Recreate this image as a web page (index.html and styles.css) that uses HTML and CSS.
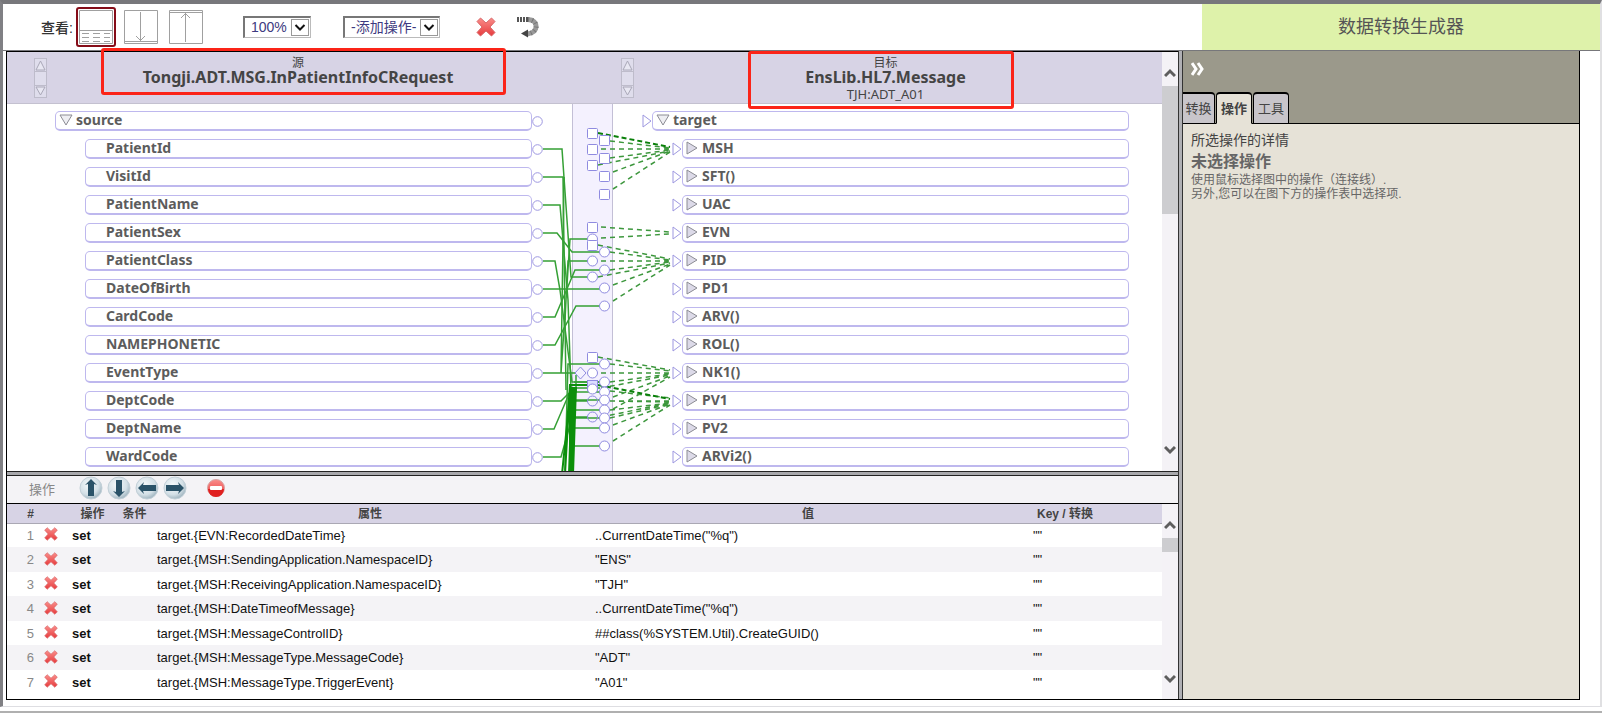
FILE: index.html
```html
<!DOCTYPE html>
<html lang="zh-CN">
<head>
<meta charset="utf-8">
<title>数据转换生成器</title>
<link rel="stylesheet" href="styles.css">
</head>
<body>
<svg class="defs" aria-hidden="true">
  <defs>
    <linearGradient id="redGrad" x1="0" y1="0" x2="0" y2="1"><stop offset="0" stop-color="#fa8d8a"/><stop offset="1" stop-color="#e63a3c"/></linearGradient>
    <radialGradient id="ballGrad" cx=".4" cy=".35" r=".7"><stop offset="0" stop-color="#f4f9fb"/><stop offset=".65" stop-color="#d3dfe6"/><stop offset="1" stop-color="#97adb9"/></radialGradient>
    <symbol id="cross" viewBox="0 0 20 20"><path d="M4.500 1 10 6 15.500 1 19 4.500 14 10 19 15.500 15.500 19 10 14 4.500 19 1 15.500 6 10 1 4.500Z" fill="url(#redGrad)" stroke="#d9686a" stroke-width="1" stroke-linejoin="round"/></symbol>
    <symbol id="ball" viewBox="0 0 24 24"><circle cx="12" cy="12" r="11" fill="url(#ballGrad)" stroke="#c3d0d8"/></symbol>
    <symbol id="down" viewBox="0 0 14 12"><path d="M1 1H13L7 11Z" fill="#eeeef2" stroke="#8c8c94"/></symbol>
    <symbol id="right" viewBox="0 0 12 14"><path d="M1 1V13L11 7Z" fill="#dcdae8" stroke="#8c8c94"/></symbol>
    <symbol id="inport" viewBox="0 0 10 14"><path d="M1 1V13L9 7Z" fill="#fff" stroke="#9d97e0"/></symbol>
    <symbol id="outport" viewBox="0 0 11 11"><circle cx="5.500" cy="5.500" r="4.800" fill="#fff" stroke="#9d97e0"/></symbol>
    <symbol id="chevUp" viewBox="0 0 12 10"><path d="M1 8 6 3 11 8" fill="none" stroke="#5e5e5e" stroke-width="3"/></symbol>
    <symbol id="chevDown" viewBox="0 0 12 10"><path d="M1 2 6 7 11 2" fill="none" stroke="#5e5e5e" stroke-width="3"/></symbol>
    <symbol id="spin" viewBox="0 0 13 40"><rect x=".5" y=".5" width="12" height="39" fill="#dfddec" stroke="#bebccb"/><path d="M.5 13.500H12.500M.5 27.500H12.500" stroke="#bebccb"/><path d="M6.500 3 11 12H2ZM6.500 37 11 29H2Z" fill="#e8e7f2" stroke="#aaa8b8"/></symbol>
  </defs>
</svg>
<div class="window">
  <header class="toolbar">
    <span class="view-label">查看:</span>
    <div class="views">
      <button class="view selected" aria-label="分栏视图"><svg width="34" height="34" viewBox="0 0 34 34"><path d="M.5.5H33.500V33.500H.5ZM.5 20.500H33.500M3 23.500H10M14 23.500H21M25 23.500H31M3 27.500H10M14 27.500H21M25 27.500H31M3 31.500H10M14 31.500H21M25 31.500H31" fill="none" stroke="#a0a0a0"/></svg></button>
      <button class="view" aria-label="仅图"><svg width="34" height="34" viewBox="0 0 34 34"><path d="M.5.5H33.500V33.500H.5ZM.5 31.500H33.500M16.500 2V31M12 26 16.500 30.500 21 26" fill="none" stroke="#a0a0a0"/></svg></button>
      <button class="view" aria-label="仅操作"><svg width="34" height="34" viewBox="0 0 34 34"><path d="M.5.5H33.500V33.500H.5ZM.5 2.500H33.500M16.500 3V32M12 8 16.500 3.500 21 8" fill="none" stroke="#a0a0a0"/></svg></button>
    </div>
    <span class="select zoom"><select aria-label="缩放"><option>100%</option></select><svg width="18" height="17" viewBox="0 0 18 17"><rect x=".5" y=".5" width="17" height="16" fill="#fff" stroke="#999"/><path d="M4.500 6 9 10.500 13.500 6" fill="none" stroke="#111" stroke-width="2"/></svg></span>
    <span class="select add"><select aria-label="添加操作"><option>-添加操作-</option></select><svg width="18" height="17" viewBox="0 0 18 17"><rect x=".5" y=".5" width="17" height="16" fill="#fff" stroke="#999"/><path d="M4.500 6 9 10.500 13.500 6" fill="none" stroke="#111" stroke-width="2"/></svg></span>
    <button class="icon-btn" aria-label="删除"><svg width="20" height="20"><use href="#cross"/></svg></button>
    <button class="icon-btn undo" aria-label="撤消"><svg width="24" height="24" viewBox="0 0 24 24"><path d="M12 4.500C23 5 23 18 11 19" fill="none" stroke="#9a9a9a" stroke-width="5"/><path d="M12 4.500C23 5 23 18 11 19" fill="none" stroke="#777" stroke-width="5" stroke-dasharray="1 3"/><path d="M1 4.500H13" stroke="#555" stroke-width="5" stroke-dasharray="2 1"/><path d="M5 18.500 12 14.500V22.500Z" fill="#444"/></svg></button>
    <h1 class="page-title">数据转换生成器</h1>
  </header>

  <main class="workspace">
    <div class="left">
      <section class="diagram">
        <div class="diagram-main">
          <div class="heads">
            <div class="head source-head">
              <svg width="13" height="40"><use href="#spin"/></svg>
              <div class="head-text"><span>源</span><strong>Tongji.ADT.MSG.InPatientInfoCRequest</strong></div>
              <i class="mark mark-source"></i>
            </div>
            <div class="head target-head">
              <svg width="13" height="40"><use href="#spin"/></svg>
              <div class="head-text"><span>目标</span><strong>EnsLib.HL7.Message</strong><small>TJH:ADT_A01</small></div>
              <i class="mark mark-target"></i>
            </div>
          </div>
          <div class="canvas">
            <ul class="tree source">
              <li class="root"><span class="box"><svg width="14" height="12"><use href="#down"/></svg>source</span><svg width="11" height="11"><use href="#outport"/></svg></li>
              <li><span class="box">PatientId</span><svg width="11" height="11"><use href="#outport"/></svg></li>
              <li><span class="box">VisitId</span><svg width="11" height="11"><use href="#outport"/></svg></li>
              <li><span class="box">PatientName</span><svg width="11" height="11"><use href="#outport"/></svg></li>
              <li><span class="box">PatientSex</span><svg width="11" height="11"><use href="#outport"/></svg></li>
              <li><span class="box">PatientClass</span><svg width="11" height="11"><use href="#outport"/></svg></li>
              <li><span class="box">DateOfBirth</span><svg width="11" height="11"><use href="#outport"/></svg></li>
              <li><span class="box">CardCode</span><svg width="11" height="11"><use href="#outport"/></svg></li>
              <li><span class="box">NAMEPHONETIC</span><svg width="11" height="11"><use href="#outport"/></svg></li>
              <li><span class="box">EventType</span><svg width="11" height="11"><use href="#outport"/></svg></li>
              <li><span class="box">DeptCode</span><svg width="11" height="11"><use href="#outport"/></svg></li>
              <li><span class="box">DeptName</span><svg width="11" height="11"><use href="#outport"/></svg></li>
              <li><span class="box">WardCode</span><svg width="11" height="11"><use href="#outport"/></svg></li>
            </ul>
            <div class="band"></div>
            <ul class="tree target">
              <li class="root"><svg width="10" height="14"><use href="#inport"/></svg><span class="box"><svg width="14" height="12"><use href="#down"/></svg>target</span></li>
              <li><svg width="10" height="14"><use href="#inport"/></svg><span class="box"><svg width="12" height="14"><use href="#right"/></svg>MSH</span></li>
              <li><svg width="10" height="14"><use href="#inport"/></svg><span class="box"><svg width="12" height="14"><use href="#right"/></svg>SFT()</span></li>
              <li><svg width="10" height="14"><use href="#inport"/></svg><span class="box"><svg width="12" height="14"><use href="#right"/></svg>UAC</span></li>
              <li><svg width="10" height="14"><use href="#inport"/></svg><span class="box"><svg width="12" height="14"><use href="#right"/></svg>EVN</span></li>
              <li><svg width="10" height="14"><use href="#inport"/></svg><span class="box"><svg width="12" height="14"><use href="#right"/></svg>PID</span></li>
              <li><svg width="10" height="14"><use href="#inport"/></svg><span class="box"><svg width="12" height="14"><use href="#right"/></svg>PD1</span></li>
              <li><svg width="10" height="14"><use href="#inport"/></svg><span class="box"><svg width="12" height="14"><use href="#right"/></svg>ARV()</span></li>
              <li><svg width="10" height="14"><use href="#inport"/></svg><span class="box"><svg width="12" height="14"><use href="#right"/></svg>ROL()</span></li>
              <li><svg width="10" height="14"><use href="#inport"/></svg><span class="box"><svg width="12" height="14"><use href="#right"/></svg>NK1()</span></li>
              <li><svg width="10" height="14"><use href="#inport"/></svg><span class="box"><svg width="12" height="14"><use href="#right"/></svg>PV1</span></li>
              <li><svg width="10" height="14"><use href="#inport"/></svg><span class="box"><svg width="12" height="14"><use href="#right"/></svg>PV2</span></li>
              <li><svg width="10" height="14"><use href="#inport"/></svg><span class="box"><svg width="12" height="14"><use href="#right"/></svg>ARVi2()</span></li>
            </ul>
            <svg class="wires" width="680" height="400" viewBox="7 104 680 400">
              <g fill="none" stroke="#35a035" stroke-width="1.500">
                <path d="M543 149H562L571 277H588"/>
                <path d="M543 177H563L566 390"/>
                <path d="M543 205H560L568 300 571 390"/>
                <path d="M543 233H557L572 252H600"/>
                <path d="M543 261H555L560 290 572 382H600"/>
                <path d="M543 289H600"/>
                <path d="M543 317H555L575 270H600"/>
                <path d="M543 345H555L576 306H600"/>
                <path d="M543 373H561L564 177M543 373H576M561 373 566 300 570 239H588M565 320 568 261H588"/>
                <path d="M543 401H561L569 393M543 429H554L569 394M543 457H561L570 425"/>
                <path d="M565 470 568 364H600M576 375V392H600M571 470V385H588M574 382H600M576 388H600M573 401H588M573 400H600M572 410H600M573 417H588M573 418H600M572 428H600M572 446H600"/>
              </g>
              <g fill="none" stroke="#0b8f0b" stroke-width="2">
                <path d="M588 385H570L567 425 562 474M570 387 565 474M572 387 569 474M574 387 571 474M576 387 573 474"/>
                <path d="M570 385V474"/>
              </g>
              <g fill="none" stroke="#3d973d" stroke-width="1.500" stroke-dasharray="5 4">
                <path d="M610 141 670 148M601 149H670M610 158 670 150M598 165 670 151M613 172 670 151M613 189 670 152"/>
                <path d="M601 227 670 232M601 238 670 234"/>
                <path d="M598 245 670 259M610 252 670 260M601 261H670M610 270 670 262M598 277 670 263M613 285 670 264M613 301 670 265"/>
                <path d="M598 357 670 370M610 364 670 371M601 373H670M610 382 670 374M601 388 670 375M613 397 670 376M613 409 670 377"/>
                <path d="M610 391 670 398M601 401H670M610 401 670 402M610 410 670 403M601 417 670 403M610 418 670 404M613 425 670 404M613 441 670 405"/>
              </g>
              <path d="M598 133 670 147M598 385 670 399" fill="none" stroke="#0a800a" stroke-width="2" stroke-dasharray="5 3"/>
              <g fill="#fff" stroke="#8f8be0">
                <circle cx="592.500" cy="239" r="5"/>
                <rect x="587.500" y="128.500" width="10" height="10" rx="1"/><rect x="599.500" y="135.500" width="10" height="10" rx="1"/>
                <rect x="587.500" y="144.500" width="10" height="10" rx="1"/><rect x="599.500" y="153.500" width="10" height="10" rx="1"/>
                <rect x="587.500" y="160.500" width="10" height="10" rx="1"/><rect x="599.500" y="171.500" width="10" height="10" rx="1"/>
                <rect x="599.500" y="189.500" width="10" height="10" rx="1"/><rect x="587.500" y="222.500" width="10" height="10" rx="1"/>
                <rect x="587.500" y="240.500" width="10" height="10" rx="1"/><rect x="587.500" y="352.500" width="10" height="10" rx="1"/>
                <circle cx="604.500" cy="252" r="5"/><circle cx="592.500" cy="261" r="5"/><circle cx="604.500" cy="270" r="5"/><circle cx="592.500" cy="277" r="5"/>
                <circle cx="604.500" cy="288" r="5"/><circle cx="604.500" cy="306" r="5"/><circle cx="604.500" cy="364" r="5"/><circle cx="592.500" cy="373" r="5"/>
                <path d="M575 373 580.500 367 586 373 580.500 379Z" fill="none"/>
                <rect x="587.500" y="380.500" width="10" height="10" fill="#dcdcff"/>
                <circle cx="604.500" cy="382" r="5"/><circle cx="604.500" cy="392" r="5"/><circle cx="592.500" cy="389" r="5"/><circle cx="604.500" cy="400" r="5"/>
                <circle cx="592.500" cy="401" r="5" fill="none"/><circle cx="604.500" cy="410" r="5"/><circle cx="592.500" cy="417" r="5" fill="none"/><circle cx="604.500" cy="418" r="5"/>
                <circle cx="604.500" cy="428" r="5"/><circle cx="604.500" cy="446" r="5"/>
              </g>
            </svg>
          </div>
        </div>
        <div class="scrollbar diagram-scroll"><svg width="12" height="10"><use href="#chevUp"/></svg><i class="thumb"></i><svg class="last" width="12" height="10"><use href="#chevDown"/></svg></div>
      </section>
      <div class="split-h"></div>
      <section class="actions">
        <div class="action-bar">
          <span class="action-label">操作</span>
          <div class="balls">
            <button class="icon-btn" aria-label="上移"><svg width="24" height="24" viewBox="0 0 24 24"><use href="#ball"/><path d="M12 3 18 9 15 8V20H9V8L6 9Z" fill="#2a5268"/></svg></button>
            <button class="icon-btn" aria-label="下移"><svg width="24" height="24" viewBox="0 0 24 24"><use href="#ball"/><path d="M12 21 18 15 15 16V4H9V16L6 15Z" fill="#2a5268"/></svg></button>
            <button class="icon-btn" aria-label="左移"><svg width="24" height="24" viewBox="0 0 24 24"><use href="#ball"/><path d="M3 12 9 6 8 9H21V15H8L9 18Z" fill="#2a5268"/></svg></button>
            <button class="icon-btn" aria-label="右移"><svg width="24" height="24" viewBox="0 0 24 24"><use href="#ball"/><path d="M21 12 15 6 16 9H3V15H16L15 18Z" fill="#2a5268"/></svg></button>
          </div>
          <button class="icon-btn" aria-label="全部移除"><svg width="20" height="20" viewBox="0 0 20 20"><circle cx="10" cy="10" r="8.500" fill="url(#redGrad)" stroke="#d9a5a5"/><path d="M2 11A8 8 0 0 0 18 11Z" fill="#e02020"/><rect x="4" y="8" width="12" height="4" rx="1" fill="#fff"/></svg></button>
        </div>
        <div class="table-area">
          <table>
            <colgroup><col class="c-num"><col class="c-del"><col class="c-op"><col class="c-cond"><col><col><col class="c-key"><col class="c-end"></colgroup>
            <thead><tr><th class="num">#</th><th></th><th>操作</th><th>条件</th><th>属性</th><th>值</th><th>Key / 转换</th><th></th></tr></thead>
            <tbody>
              <tr><td class="num">1</td><td><button class="icon-btn" aria-label="删除 1"><svg width="14" height="14"><use href="#cross"/></svg></button></td><td class="op">set</td><td></td><td>target.{EVN:RecordedDateTime}</td><td>..CurrentDateTime("%q")</td><td>""</td><td></td></tr>
              <tr><td class="num">2</td><td><button class="icon-btn" aria-label="删除 2"><svg width="14" height="14"><use href="#cross"/></svg></button></td><td class="op">set</td><td></td><td>target.{MSH:SendingApplication.NamespaceID}</td><td>"ENS"</td><td>""</td><td></td></tr>
              <tr><td class="num">3</td><td><button class="icon-btn" aria-label="删除 3"><svg width="14" height="14"><use href="#cross"/></svg></button></td><td class="op">set</td><td></td><td>target.{MSH:ReceivingApplication.NamespaceID}</td><td>"TJH"</td><td>""</td><td></td></tr>
              <tr><td class="num">4</td><td><button class="icon-btn" aria-label="删除 4"><svg width="14" height="14"><use href="#cross"/></svg></button></td><td class="op">set</td><td></td><td>target.{MSH:DateTimeofMessage}</td><td>..CurrentDateTime("%q")</td><td>""</td><td></td></tr>
              <tr><td class="num">5</td><td><button class="icon-btn" aria-label="删除 5"><svg width="14" height="14"><use href="#cross"/></svg></button></td><td class="op">set</td><td></td><td>target.{MSH:MessageControlID}</td><td>##class(%SYSTEM.Util).CreateGUID()</td><td>""</td><td></td></tr>
              <tr><td class="num">6</td><td><button class="icon-btn" aria-label="删除 6"><svg width="14" height="14"><use href="#cross"/></svg></button></td><td class="op">set</td><td></td><td>target.{MSH:MessageType.MessageCode}</td><td>"ADT"</td><td>""</td><td></td></tr>
              <tr><td class="num">7</td><td><button class="icon-btn" aria-label="删除 7"><svg width="14" height="14"><use href="#cross"/></svg></button></td><td class="op">set</td><td></td><td>target.{MSH:MessageType.TriggerEvent}</td><td>"A01"</td><td>""</td><td></td></tr>
            </tbody>
          </table>
          <div class="scrollbar table-scroll"><svg width="12" height="10"><use href="#chevUp"/></svg><i class="thumb"></i><svg class="last" width="12" height="10"><use href="#chevDown"/></svg></div>
        </div>
      </section>
    </div>
    <div class="split-v"></div>
    <aside class="side">
      <div class="side-head">
        <button class="collapse" aria-label="折叠"><svg width="13" height="14" viewBox="0 0 13 14"><path d="M1 1 5 7 1 13M7 1 11 7 7 13" fill="none" stroke="#fff" stroke-width="3"/></svg></button>
        <nav class="tabs"><button>转换</button><button class="active">操作</button><button>工具</button></nav>
      </div>
      <div class="side-body">
        <h2>所选操作的详情</h2>
        <h3>未选择操作</h3>
        <p>使用鼠标选择图中的操作（连接线）.</p>
        <p>另外,您可以在图下方的操作表中选择项.</p>
      </div>
    </aside>
  </main>
</div>
<footer class="status"></footer>
</body>
</html>
```
FILE: styles.css
```css
* { box-sizing: border-box; }
body {
  margin: 0;
  height: 100vh;
  display: flex;
  flex-direction: column;
  background: #fff;
  color: #444;
  font-family: "Liberation Sans", "Noto Sans CJK SC", sans-serif;
  font-size: 13px;
  overflow: hidden;
}
button {
  margin: 0;
  padding: 0;
  border: 0;
  background: none;
  font: inherit;
  color: inherit;
}
svg { display: block; flex: none; }
.defs { position: absolute; width: 0; height: 0; }

.window {
  flex: 1;
  min-height: 0;
  display: flex;
  flex-direction: column;
  border-top: 4px solid #77777b;
  border-left: 3px solid #808084;
  border-right: 2px solid #e0e0e2;
  border-bottom: 1px solid #dedee2;
  padding-bottom: 6px;
}
.status { height: 6px; border-bottom: 2px solid #b0b0b0; border-top: 0; }

.toolbar {
  display: flex;
  align-items: center;
  height: 47px;
  border-bottom: 1px solid #77777b;
  padding-left: 38px;
}
.view-label { width: 35px; font-size: 14px; font-weight: 500; color: #333; white-space: nowrap; }
.views { display: flex; gap: 5px; margin-right: 37px; }
.view { padding: 1px; border: 2px solid transparent; border-radius: 3px; }
.view.selected { border-color: #850c18; }
.select { position: relative; display: block; height: 22px; }
.select select {
  appearance: none;
  width: 100%;
  height: 22px;
  padding: 0 0 2px 6px;
  border: 1px solid #bbb;
  border-top: 2px solid #777;
  border-left: 2px solid #777;
  border-radius: 0;
  background: #fff;
  color: #3e3a80;
  font: 14px "Liberation Sans", "Noto Sans CJK SC", sans-serif;
}
.select svg { position: absolute; top: 3px; right: 2px; pointer-events: none; }
.zoom { width: 68px; margin-right: 32px; }
.add { width: 97px; margin-right: 36px; }
.undo { margin-left: 20px; }
.page-title {
  margin: 0 0 0 auto;
  align-self: stretch;
  display: flex;
  align-items: center;
  justify-content: center;
  width: 398px;
  padding-bottom: 4px;
  background: #def2aa;
  color: #555;
  font-size: 18px;
  font-weight: 400;
}

.workspace {
  flex: 1;
  min-height: 0;
  display: flex;
  margin: 0 20px 0 3px;
  border-left: 1px solid #000;
  border-bottom: 1px solid #000;
}
.left { flex: 1; min-width: 0; display: flex; flex-direction: column; border-top: 1px solid #000; }
.split-v { width: 5px; background: #b0b0b4; border: 1px solid #333; border-width: 0 1px; }
.split-h { height: 5px; background: #a8a8ac; border: 1px solid #222; border-width: 1px 0; }

.diagram { flex: 1; min-height: 0; display: flex; }
.diagram-main { flex: 1; min-width: 0; display: flex; flex-direction: column; }
.heads { display: flex; height: 52px; background: #d7d3e5; border-bottom: 1px solid #c4c1d0; }
.head { position: relative; display: flex; align-items: center; }
.source-head { width: 601px; padding: 0 59px 0 27px; }
.target-head { flex: 1; padding: 0 25px 0 13px; }
.head-text {
  flex: 1;
  align-self: flex-start;
  display: flex;
  flex-direction: column;
  align-items: center;
  padding-top: 2px;
  font-family: "Noto Sans", "Noto Sans CJK SC", sans-serif;
}
.head-text span { font-family: "Noto Sans CJK SC", sans-serif; font-size: 12px; line-height: 15px; }
.head-text strong { font-size: 16px; line-height: 17px; color: #444; }
.head-text small { font-size: 13px; line-height: 17px; }
.mark { position: absolute; border: 3px solid #fb2418; border-radius: 3px; z-index: 2; }
.mark-source { left: 94px; right: 102px; top: -4px; height: 47px; }
.mark-target { left: 140px; right: 148px; top: -1px; height: 58px; }

.canvas { position: relative; flex: 1; min-height: 0; display: flex; overflow: hidden; }
.tree {
  list-style: none;
  margin: 0;
  padding: 7px 0 0;
  display: flex;
  flex-direction: column;
  gap: 8px;
  font-family: "Noto Sans", sans-serif;
  font-size: 14px;
  font-weight: 700;
  color: #5c5c5c;
}
.tree li { display: flex; align-items: center; height: 20px; flex: none; }
.tree .box {
  flex: 1;
  display: flex;
  align-items: center;
  gap: 3px;
  height: 20px;
  padding-left: 3px;
  padding-bottom: 2px;
  line-height: 15px;
  border: 1px solid #beb8ee;
  border-bottom-width: 2px;
  border-radius: 5px;
}
.source { width: 565px; padding-left: 48px; padding-right: 29px; }
.source li:not(.root) { padding-left: 30px; }
.source li:not(.root) .box { padding-left: 20px; }
.band { width: 41px; background: #f4f1fe; border: 1px solid #c3bfd6; border-width: 0 1px; }
.target { flex: 1; padding-left: 29px; padding-right: 33px; }
.target li:not(.root) { padding-left: 30px; }
.target li:not(.root) .box { gap: 4px; }
.wires { position: absolute; left: 0; top: 0; }

.scrollbar { width: 16px; flex: none; display: flex; flex-direction: column; align-items: center; background: #f4f2f6; }
.thumb { width: 16px; background: #cdcdd0; }
.last { margin-top: auto; }
.diagram-scroll { padding: 16px 0; }
.diagram-scroll .thumb { height: 128px; margin-top: 8px; }
.table-scroll { padding: 16px 0 15px; }
.table-scroll .thumb { height: 14px; margin-top: 8px; }

.action-bar { display: flex; align-items: center; height: 28px; padding: 0 0 3px 22px; background: #f4f3f6; border-bottom: 1px solid #000; }
.action-label { width: 50px; color: #888; }
.balls { display: flex; gap: 4px; margin-right: 19px; }
.table-area { display: flex; height: 195px; }
table { flex: 1; align-self: flex-start; width: 100%; table-layout: fixed; border-collapse: collapse; color: #111; }
.c-num { width: 33px; }
.c-del { width: 27px; }
.c-op { width: 51px; }
.c-cond { width: 33px; }
.c-key { width: 76px; }
.c-end { width: 59px; }
th { height: 19px; padding: 1px 0 0; background: #d7d3e5; border-bottom: 1px solid #aaa8b4; color: #444; font-size: 12px; line-height: 16px; white-space: nowrap; }
td { height: 24px; padding: 1px 0 0 6px; line-height: 16px; white-space: nowrap; }
tbody tr:nth-child(even) td { height: 25px; background: #f4f3f6; }
td:nth-child(2) { padding: 2px 0 0 4px; }
td:nth-child(3) { padding-left: 5px; }
.num { padding-right: 6px; text-align: right; }
td.num { color: #888; }
.op { font-weight: 700; }

.side { width: 397px; display: flex; flex-direction: column; background: #e6e2d7; border-right: 1px solid #000; }
.side-head { display: flex; flex-direction: column; justify-content: space-between; height: 73px; background: #9b998b; border-bottom: 1px solid #000; }
.collapse { align-self: flex-start; margin: 11px 0 0 8px; }
.tabs { display: flex; gap: 1px; height: 32px; margin-bottom: -1px; }
.tabs button { width: 36px; padding-bottom: 3px; background: #c8c5ca; border: 1px solid #000; border-top-width: 2px; border-radius: 4px 4px 0 0; }
.tabs button:first-child { width: 32px; border-left: 0; border-top-left-radius: 0; }
.tabs .active { background: #e6e2d7; border-bottom-color: #e6e2d7; font-weight: 700; }
.side-body { padding: 6px 8px; }
.side-body h2 { margin: 0; font-size: 14px; line-height: 21px; font-weight: 400; color: #444; }
.side-body h3 { margin: 0; font-size: 16px; line-height: 22px; color: #666; }
.side-body p { margin: 0; font-size: 12px; line-height: 14px; color: #666; }
```
